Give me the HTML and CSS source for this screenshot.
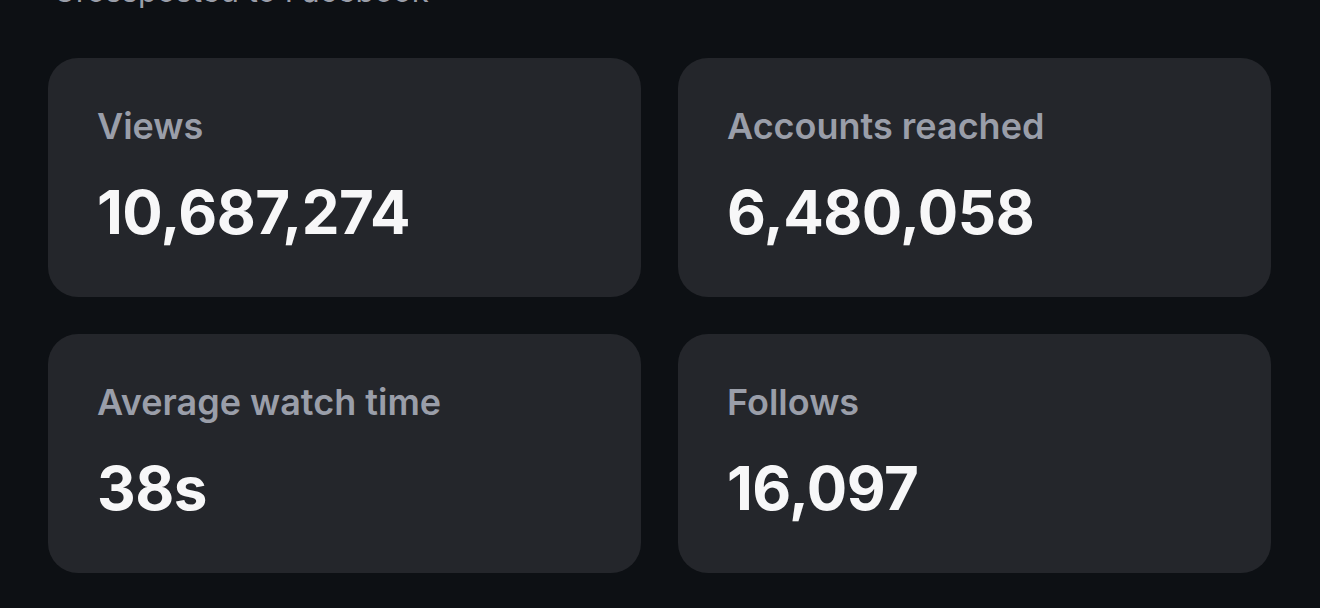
FILE: index.html
```html
<!DOCTYPE html>
<html lang="en">
<head>
<meta charset="utf-8">
<title>Insights</title>
<link rel="stylesheet" href="styles.css">
</head>
<body>
<main class="page">
  <p class="crosspost">Crossposted to Facebook</p>
  <section class="stats">
    <div class="card">
      <div class="label">Views</div>
      <div class="value">10,687,274</div>
    </div>
    <div class="card">
      <div class="label">Accounts reached</div>
      <div class="value">6,480,058</div>
    </div>
    <div class="card">
      <div class="label">Average watch time</div>
      <div class="value">38s</div>
    </div>
    <div class="card">
      <div class="label">Follows</div>
      <div class="value">16,097</div>
    </div>
  </section>
</main>
</body>
</html>
```

FILE: styles.css
```css
html, body {
  margin: 0;
  padding: 0;
  background: #0d1014;
  height: 100%;
  overflow: hidden;
}

.page {
  font-family: Inter, "Noto Sans", "Liberation Sans", sans-serif;
  padding: 0 49px 0 48px;
}

.crosspost {
  margin: -29px 0 0 5px;
  height: 87px;
  line-height: 40px;
  font-size: 31px;
  color: #9a9ea9;
}

.stats {
  display: grid;
  grid-template-columns: 1fr 1fr;
  column-gap: 37px;
  row-gap: 37px;
}

.card {
  background: #24262b;
  border-radius: 30px;
  height: 239px;
  box-sizing: border-box;
  padding: 47px 50px 0 49px;
  display: flex;
  flex-direction: column;
}

.label {
  font-size: 36px;
  font-weight: 600;
  line-height: 42px;
  color: #9a9ea9;
}

.value {
  margin-top: 31px;
  font-size: 60px;
  font-weight: 700;
  line-height: 68px;
  color: #f7f7f8;
  letter-spacing: -0.5px;
}
```
